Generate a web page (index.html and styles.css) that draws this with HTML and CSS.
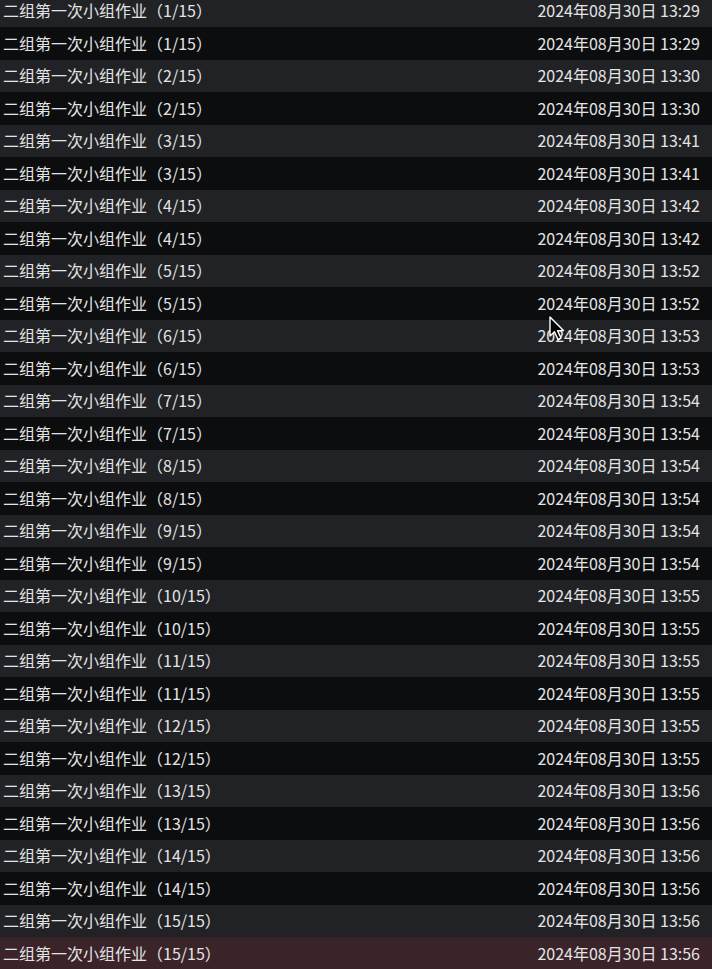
FILE: index.html
```html
<!DOCTYPE html>
<html lang="zh">
<head>
    <meta charset="UTF-8">
    <meta name="viewport" content="width=device-width, initial-scale=1.0">
    <title>作业列表</title>
    <link rel="stylesheet" href="styles.css">
</head>
<body>
    <div class="list" id="list"></div>

    <svg class="cursor" width="16" height="26" viewBox="0 0 16 26">
        <path d="M1 1 L1 20 L5.5 15.8 L9 23.5 L12 22.2 L8.6 14.6 L14.5 14.6 Z" fill="#000" stroke="#fff" stroke-width="1.4" stroke-linejoin="round"/>
    </svg>

    <script>
        const times = ['13:29', '13:30', '13:41', '13:42', '13:52', '13:53', '13:54', '13:54', '13:54',
                       '13:55', '13:55', '13:55', '13:56', '13:56', '13:56'];
        const list = document.getElementById('list');

        for (let i = 0; i < 15; i++) {
            for (let k = 0; k < 2; k++) {
                const row = document.createElement('div');
                row.className = 'row';
                if (i === 14 && k === 1) row.classList.add('active');
                row.innerHTML = '<span class="name">二组第一次小组作业（' + (i + 1) + '/15）</span>' +
                    '<span class="date">2024年08月30日 ' + times[i] + '</span>';
                list.appendChild(row);
            }
        }
    </script>
</body>
</html>
```

FILE: styles.css
```css
html, body {
    margin: 0;
    padding: 0;
    height: 100%;
    overflow: hidden;
    background-color: #0c0d0f;
}
body {
    font-family: "Noto Sans CJK SC", "Noto Sans", sans-serif;
    font-size: 16px;
    color: #e4e4e4;
    position: relative;
}
.list {
    margin-top: -5.5px;
}
.row {
    display: flex;
    justify-content: space-between;
    align-items: center;
    box-sizing: border-box;
    height: 32.5px;
    padding: 0 12px 1px 3px;
    background-color: #0c0d0f;
}
.row:nth-child(odd) {
    background-color: #212225;
}
.row.active {
    background-color: #3a2329;
}
.name, .date {
    white-space: nowrap;
}
.cursor {
    position: absolute;
    left: 549px;
    top: 316px;
}
```
